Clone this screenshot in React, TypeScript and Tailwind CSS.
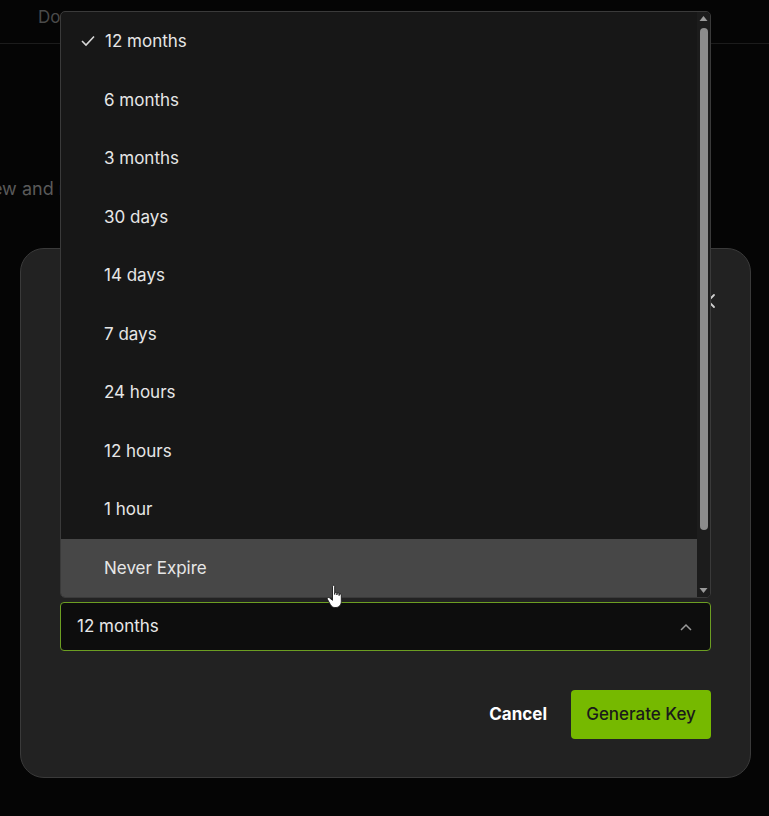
import React from "react";

const items = [
  "12 months",
  "6 months",
  "3 months",
  "30 days",
  "14 days",
  "7 days",
  "24 hours",
  "12 hours",
  "1 hour",
  "Never Expire",
];

export default function App() {
  return (
    <div
      className="relative w-[769px] h-[816px] overflow-hidden bg-[#050505] text-[#e6e6e6]"
      style={{ fontFamily: "Inter, 'Noto Sans', sans-serif" }}
    >
      {/* background page */}
      <div className="h-[44px] border-b border-[#1c1c1c] flex items-center pl-[38px]">
        <span className="text-[17px] text-[#4a4a4a] -mt-[8px]">Docs</span>
      </div>
      <div className="pt-[131px] pl-0">
        <p className="text-[18px] text-[#5a5a5a] -ml-[44px] whitespace-nowrap">Review and manage your API keys</p>
      </div>

      {/* dialog */}
      <div className="absolute left-[20px] top-[248px] w-[731px] h-[530px] rounded-[24px] border border-[#3a3a3a] bg-[#222222] flex flex-col justify-end px-[39px] pb-[38px]">
        <div className="absolute right-[34px] top-[44px] text-[#d0d0d0]">
          <svg width="16" height="16" viewBox="0 0 16 16" fill="none" stroke="currentColor" strokeWidth="1.8" strokeLinecap="round">
            <path d="M2 2 L14 14 M14 2 L2 14" />
          </svg>
        </div>
        <div className="h-[49px] rounded-[4px] border border-[#6c9e22] bg-[#0d0d0d] flex items-center justify-between pl-[16px] pr-[18px]">
          <span className="text-[17px] text-[#e8e8e8]">12 months</span>
          <svg width="12" height="8" viewBox="0 0 12 8" fill="none" stroke="#9a9a9a" strokeWidth="1.5">
            <path d="M1 7 L6 2 L11 7" />
          </svg>
        </div>
        <div className="mt-[39px] flex items-center justify-end gap-[24px]">
          <button className="text-[17px] font-bold text-white">Cancel</button>
          <button className="h-[49px] w-[140px] rounded-[4px] bg-[#76b900] text-[17px] font-medium text-[#1a1a1a]">
            Generate Key
          </button>
        </div>
      </div>

      {/* dropdown menu */}
      <div className="absolute left-[60px] top-[11px] w-[651px] h-[587px] rounded-[5px] border border-[#3a3a3a] bg-[#171717] flex overflow-hidden">
        <div className="flex-1 flex flex-col">
          {items.map((it, i) => (
            <div
              key={it}
              className={`h-[58.5px] shrink-0 flex items-center relative ${
                i === items.length - 1 ? "bg-[#474747]" : ""
              }`}
            >
              {i === 0 && (
                <svg
                  className="absolute left-[20px]"
                  width="14"
                  height="12"
                  viewBox="0 0 14 12"
                  fill="none"
                  stroke="#d8d8d8"
                  strokeWidth="1.6"
                >
                  <path d="M1 6 L5 10 L13 1.5" />
                </svg>
              )}
              <span className={`text-[17px] text-[#e6e6e6] ${i === 0 ? "pl-[44px]" : "pl-[43px]"} pt-[1px]`}>{it}</span>
            </div>
          ))}
        </div>
        <div className="w-[13px] bg-[#1c1c1c] flex flex-col items-center py-[3px]">
          <svg width="9" height="7" viewBox="0 0 9 7">
            <path d="M0.5 6 L4.5 1 L8.5 6 Z" fill="#9a9a9a" />
          </svg>
          <div className="mt-[6px] w-[8px] h-[502px] rounded-full bg-[#8c8c8c]" />
          <div className="flex-1" />
          <svg width="9" height="7" viewBox="0 0 9 7">
            <path d="M0.5 1 L4.5 6 L8.5 1 Z" fill="#9a9a9a" />
          </svg>
        </div>
      </div>

      {/* cursor */}
      <svg
        className="absolute left-[326px] top-[584px]"
        width="20"
        height="26"
        viewBox="0 0 20 26"
      >
        <path
          d="M6.5 2.2 C6.5 0.9 8.7 0.9 8.7 2.2 L8.7 10.5 L8.7 9.2 C8.7 8 10.9 8 10.9 9.2 L10.9 11 L10.9 9.8 C10.9 8.6 13.1 8.6 13.1 9.8 L13.1 11.6 L13.1 10.8 C13.1 9.7 15.3 9.7 15.3 10.8 L15.3 17.5 C15.3 21 13 23.5 10 23.5 L8.8 23.5 C6.8 23.5 5.5 22.5 4.4 20.6 L1.4 15.2 C0.8 14 2.2 12.9 3.4 13.8 L6.5 16.3 Z"
          fill="#ffffff"
          stroke="#1a1a1a"
          strokeWidth="0.9"
          strokeLinejoin="round"
        />
      </svg>
    </div>
  );
}
